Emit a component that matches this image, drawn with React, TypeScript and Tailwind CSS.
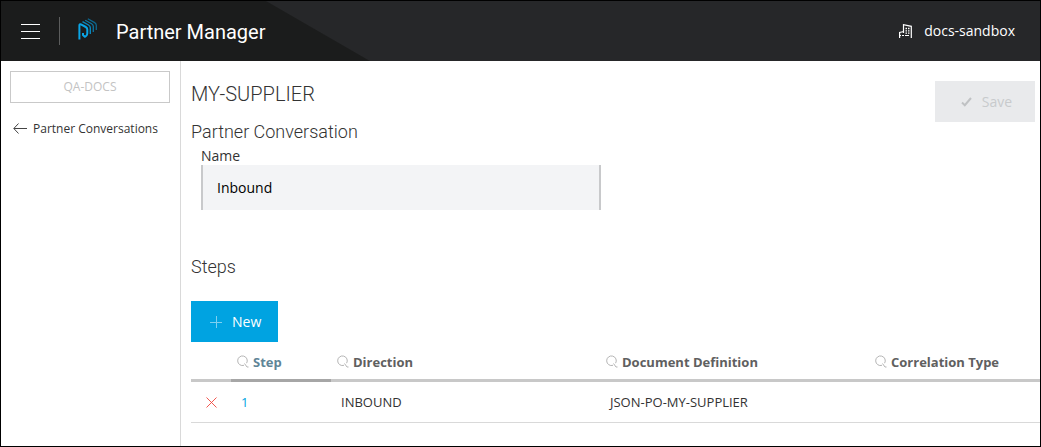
import { useState } from "react";

interface Step {
  id: number;
  direction: string;
  document: string;
  correlation: string;
}

const initialSteps: Step[] = [
  { id: 1, direction: "INBOUND", document: "JSON-PO-MY-SUPPLIER", correlation: "" },
];

const columns = ["Step", "Direction", "Document Definition", "Correlation Type"];

function Logo() {
  return (
    <svg width="20" height="22" viewBox="0 0 20 22" fill="none" strokeLinejoin="round" aria-hidden="true">
      <path d="M1.4 21.5V7.5Q1.4 5.8 3 6.4L7.8 9Q9.3 9.8 9.3 11.5V15.5Q9.3 17 8 18L6.8 18.8L5 17V15" stroke="#0aa5e6" strokeWidth="2" />
      <path d="M4.5 3.6L10.6 7Q12.3 8 12.3 9.8V16" stroke="#0b86bb" strokeWidth="1.4" />
      <path d="M7.2 2.2L13.6 5.8Q15.3 6.8 15.3 8.6V14" stroke="#0c75a2" strokeWidth="1.3" />
      <path d="M9.8 0.8L16.7 4.6Q18.3 5.6 18.3 7.2V12" stroke="#0d668d" strokeWidth="1.3" />
    </svg>
  );
}

function BuildingIcon() {
  return (
    <svg width="13" height="14" viewBox="0 0 13 14" fill="none" stroke="#fff" aria-hidden="true">
      <path d="M4.5 9V0.7L12.3 2.3V14" strokeWidth="1.2" />
      <path d="M5 7.5L0.6 8.5V14M0 11.5H2M3 11.5H5M6 11.5H10" strokeWidth="1.2" />
      <path d="M6.5 4.5H8M9 4.5H10.5M6.5 6.8H8M9 6.8H10.5M6.5 9.1H8M9 9.1H10.5" strokeWidth="1.3" />
    </svg>
  );
}

function SearchIcon() {
  return (
    <svg width="12" height="13" viewBox="0 0 12 13" fill="none" stroke="#b5b5b5" aria-hidden="true">
      <path d="M7 10.3A4.8 4.8 0 1 1 9.6 8.2M7.5 8.5L10 12H11.5" />
    </svg>
  );
}

export default function App() {
  const [name, setName] = useState("Inbound");
  const [steps, setSteps] = useState(initialSteps);

  function addStep() {
    setSteps([...steps, { id: steps.length + 1, direction: "INBOUND", document: "", correlation: "" }]);
  }

  return (
    <div className="flex min-h-screen flex-col border border-black bg-white font-['Open_Sans',sans-serif] text-[#333]">
      <header className="flex h-[60px] items-center bg-[#262729] bg-[linear-gradient(30deg,#1b1c1c_0,#1b1c1c_184px,transparent_185px)] bg-no-repeat text-white">
        <button aria-label="Menu" className="ml-5 flex h-5 w-[19px] items-center">
          <svg width="19" height="15" viewBox="0 0 19 15" stroke="#fff" aria-hidden="true">
            <path d="M0 0.5H19M0 7.5H19M0 14.5H19" strokeWidth="1" />
          </svg>
        </button>
        <span className="ml-[19px] h-7 w-px bg-[#5c5d5d]" />
        <span className="ml-[18px] pb-1">
          <Logo />
        </span>
        <h1 className="ml-[18px] pt-[2px] font-['Roboto',sans-serif] text-xl">Partner Manager</h1>
        <button className="mr-[25px] ml-auto flex items-center gap-3 text-sm">
          <BuildingIcon />
          docs-sandbox
        </button>
      </header>

      <div className="flex flex-1">
        <aside className="w-[180px] shrink-0 border-r border-[#d9d9d9] px-[9px] pt-[10px]">
          <button disabled className="h-8 w-40 border border-[#c9c9c9] text-xs text-[#c3c3c3]">
            QA-DOCS
          </button>
          <a href="#conversations" className="mt-[17px] ml-[3px] flex items-center gap-[6px] text-xs leading-[18px] whitespace-nowrap">
            <svg width="14" height="12" viewBox="0 0 14 12" fill="none" stroke="#444" aria-hidden="true">
              <path d="M5.5 0.5L0.8 5.5L5.5 10.5M1 5.5H14" />
            </svg>
            Partner Conversations
          </a>
        </aside>

        <main className="min-w-0 flex-1 pt-5 pl-[10px]">
          <div className="flex items-start justify-between pr-[5px]">
            <h2 className="font-['Roboto',sans-serif] text-xl leading-[26px] font-light">MY-SUPPLIER</h2>
            <button disabled className="flex h-[41px] w-[100px] items-center justify-center gap-[10px] bg-[#e9eaec] pl-[3px] text-sm text-[#c8cacc]">
              <svg width="11" height="10" viewBox="0 0 11 10" fill="none" stroke="#c0c2c4" strokeWidth="2" aria-hidden="true">
                <path d="M1 5.5L3.8 8.2L10 1" />
              </svg>
              Save
            </button>
          </div>

          <h3 className="font-['Roboto',sans-serif] text-lg leading-5 font-light">Partner Conversation</h3>
          <div className="mt-[5px] ml-[10px] max-w-[400px]">
            <label htmlFor="name" className="block text-sm leading-[18px]">
              Name
            </label>
            <input
              id="name"
              value={name}
              onChange={(event) => setName(event.target.value)}
              className="h-[45px] w-full border-x-2 border-[#c8c9cb] bg-[#f3f4f6] px-[14px] text-sm text-black"
            />
          </div>

          <h3 className="mt-[47px] font-['Roboto',sans-serif] text-lg leading-5 font-light">Steps</h3>
          <button
            onClick={addStep}
            className="mt-6 flex h-[41px] w-[87px] items-center gap-[10px] bg-[#00a3e1] pl-[19px] text-sm font-medium text-white"
          >
            <svg width="12" height="12" viewBox="0 0 12 12" stroke="#7fd0f0" aria-hidden="true">
              <path d="M6.5 0V12M0 6.5H12" />
            </svg>
            New
          </button>

          <table className="w-full table-fixed border-separate border-spacing-0 text-left text-[13px] leading-5">
            <colgroup>
              <col className="w-10" />
              <col className="w-[100px]" />
              <col className="w-[269px]" />
              <col className="w-[269px]" />
              <col />
            </colgroup>
            <thead>
              <tr className="h-10 text-[#606060]">
                <td className="border-b-[3px] border-[#c8c8c8]" />
                {columns.map((column) => (
                  <th
                    key={column}
                    className={
                      column === "Step"
                        ? "border-b-[3px] border-[#a6a6a6] pt-[2px] pl-[6px] text-[#5f8597]"
                        : "border-b-[3px] border-[#c8c8c8] pt-[2px] pl-[6px]"
                    }
                  >
                    <button className="flex items-center gap-1 font-bold whitespace-nowrap">
                      <SearchIcon />
                      {column}
                    </button>
                  </th>
                ))}
              </tr>
            </thead>
            <tbody>
              {steps.map((step) => (
                <tr key={step.id} className="h-[41px]">
                  <td className="border-b border-[#d9d9d9] pl-[15px]">
                    <button
                      aria-label="Delete step"
                      onClick={() => setSteps(steps.filter((item) => item.id !== step.id))}
                      className="block"
                    >
                      <svg width="11" height="11" viewBox="0 0 11 11" stroke="#f0453c" aria-hidden="true">
                        <path d="M0.5 0.5L10.5 10.5M10.5 0.5L0.5 10.5" strokeWidth="0.9" />
                      </svg>
                    </button>
                  </td>
                  <td className="border-b border-[#d9d9d9] pl-[10px]">
                    <a href="#step" className="text-[#00a3e1]">{step.id}</a>
                  </td>
                  <td className="border-b border-[#d9d9d9] pl-[10px]">{step.direction}</td>
                  <td className="border-b border-[#d9d9d9] pl-[10px]">{step.document}</td>
                  <td className="border-b border-[#d9d9d9] pl-[10px]">{step.correlation}</td>
                </tr>
              ))}
            </tbody>
          </table>
        </main>
      </div>
    </div>
  );
}
